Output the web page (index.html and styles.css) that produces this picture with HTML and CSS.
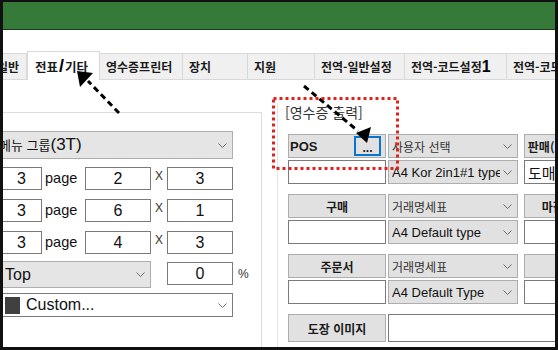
FILE: index.html
```html
<!DOCTYPE html>
<html lang="ko">
<head>
<meta charset="utf-8">
<title>설정</title>
<link rel="stylesheet" href="styles.css">
</head>
<body>
<div class="window">
  <div class="titlebar"></div>
  <div class="tabs">
    <div class="tab w-t1">일반</div>
    <div class="tab sel w-t2">전표<span class="slash">/</span>기타</div>
    <div class="tab w-t3">영수증프린터</div>
    <div class="tab w-t4">장치</div>
    <div class="tab w-t5">지원</div>
    <div class="tab w-t6">전역-일반설정</div>
    <div class="tab w-t7">전역-코드설정<span class="one">1</span></div>
    <div class="tab w-t8">전역-코드설정2</div>
  </div>
  <div class="content">
    <div class="left">
      <div class="lgroup">
        <div class="lin">
          <div class="combo gray big"><span class="txt"><span class="ko">메뉴 그룹</span>(3T)</span><svg class="chev" width="9" height="5" viewBox="0 0 9 5"><polyline points="0.5,0.5 4.5,4.5 8.5,0.5"/></svg></div>
          <div class="row">
            <div class="inp w41">3</div><div class="lbl-page">page</div><div class="inp w66">2</div><div class="lbl-x">X</div><div class="inp w66">3</div>
          </div>
          <div class="row">
            <div class="inp w41">3</div><div class="lbl-page">page</div><div class="inp w66">6</div><div class="lbl-x">X</div><div class="inp w66">1</div>
          </div>
          <div class="row row3">
            <div class="inp w41">3</div><div class="lbl-page">page</div><div class="inp w66">4</div><div class="lbl-x">X</div><div class="inp w66">3</div>
          </div>
          <div class="row row4">
            <div class="combo gray topsel"><span class="txt">Top</span><svg class="chev" width="9" height="5" viewBox="0 0 9 5"><polyline points="0.5,0.5 4.5,4.5 8.5,0.5"/></svg></div>
            <div class="inp w66 pct-in">0</div>
            <div class="lbl-pct">%</div>
          </div>
          <div class="combo white custom"><span class="swatch"></span><span class="txt">Custom...</span><svg class="chev" width="9" height="5" viewBox="0 0 9 5"><polyline points="0.5,0.5 4.5,4.5 8.5,0.5"/></svg></div>
        </div>
      </div>
    </div>
    <div class="right">
      <div class="rgroup">
        <div class="caption">[영수증 출력]</div>
        <div class="grp">
          <div class="btn pos"><span>POS</span><span class="more">...</span></div>
          <div class="cb"><span class="t ko">사용자 선택</span><svg class="chev" width="9" height="5" viewBox="0 0 9 5"><polyline points="0.5,0.5 4.5,4.5 8.5,0.5"/></svg></div>
          <div class="btn colc">판매(도매)명세서</div>
          <div class="rinp"></div>
          <div class="cb"><span class="t en">A4 Kor 2in1#1 type</span><svg class="chev" width="9" height="5" viewBox="0 0 9 5"><polyline points="0.5,0.5 4.5,4.5 8.5,0.5"/></svg></div>
          <div class="rinp colc"><span class="rtxt">도매거래처</span></div>
        </div>
        <div class="grp">
          <div class="btn">구매</div>
          <div class="cb"><span class="t ko">거래명세표</span><svg class="chev" width="9" height="5" viewBox="0 0 9 5"><polyline points="0.5,0.5 4.5,4.5 8.5,0.5"/></svg></div>
          <div class="btn colc">마감 정산서</div>
          <div class="rinp"></div>
          <div class="cb"><span class="t en">A4 Default type</span><svg class="chev" width="9" height="5" viewBox="0 0 9 5"><polyline points="0.5,0.5 4.5,4.5 8.5,0.5"/></svg></div>
          <div class="rinp colc"></div>
        </div>
        <div class="grp">
          <div class="btn">주문서</div>
          <div class="cb"><span class="t ko">거래명세표</span><svg class="chev" width="9" height="5" viewBox="0 0 9 5"><polyline points="0.5,0.5 4.5,4.5 8.5,0.5"/></svg></div>
          <div class="btn colc">발주</div>
          <div class="rinp"></div>
          <div class="cb"><span class="t en">A4 Default Type</span><svg class="chev" width="9" height="5" viewBox="0 0 9 5"><polyline points="0.5,0.5 4.5,4.5 8.5,0.5"/></svg></div>
          <div class="rinp colc"></div>
        </div>
        <div class="grp grp4">
          <div class="btn">도장 이미지</div>
          <div class="rinp wide"></div>
        </div>
      </div>
    </div>
  </div>
  <svg class="annot" width="558" height="350" viewBox="0 0 558 350">
    <rect x="273.5" y="98.5" width="124" height="70" fill="none" stroke="#e3201b" stroke-width="3" stroke-dasharray="3 3"/>
    <line x1="119" y1="113" x2="88" y2="81" stroke="#000" stroke-width="3" stroke-dasharray="6 4"/>
    <polygon points="77,71 93,73 80,87" fill="#000"/>
    <line x1="304" y1="86" x2="358" y2="131" stroke="#000" stroke-width="3" stroke-dasharray="6 4"/>
    <polygon points="356,133 371,127 367,143" fill="#000"/>
  </svg>
</div>
</body>
</html>
```

FILE: styles.css
```css
* { box-sizing: border-box; }
body { margin: 0; background: #fff; }

.window {
  position: relative;
  width: 558px;
  height: 350px;
  border: 3px solid #111;
  border-top-width: 2px;
  overflow: hidden;
  background: #fff;
  font-family: "Noto Sans CJK KR", sans-serif;
  color: #111;
}

.titlebar {
  height: 28px;
  background: #367a3a;
  border-bottom: 1px solid #1b3a1c;
}

.tabs {
  margin-top: 21px;
  height: 29px;
  display: flex;
  align-items: flex-end;
  border-bottom: 1px solid #d9d9d9;
}
.tab {
  flex: none;
  height: 26px;
  background: #f0f0f0;
  border-top: 1px solid #d9d9d9;
  border-right: 1px solid #d9d9d9;
  padding-left: 6px;
  font-size: 12px;
  font-weight: 700;
  color: #1a1a1a;
  display: flex;
  align-items: center;
  white-space: nowrap;
  overflow: hidden;
}
.tab.sel {
  height: 29px;
  margin-bottom: -1px;
  background: #fff;
  border-left: 1px solid #d9d9d9;
  padding-left: 7px;
  font-size: 12.5px;
  position: relative;
  z-index: 1;
}
.w-t1 { width: 36px; margin-left: -12px; }
.w-t2 { width: 73px; }
.w-t3 { width: 83px; }
.w-t4 { width: 65px; }
.w-t5 { width: 67px; }
.w-t6 { width: 90px; }
.w-t7 { width: 102px; }
.w-t8 { width: 100px; }
.slash {
  font-family: "Liberation Sans", sans-serif;
  font-size: 18px;
  font-weight: 900;
  margin: 0 1px;
  color: #000;
}
.one {
  font-family: "Liberation Sans", sans-serif;
  font-size: 16px;
  font-weight: 900;
  color: #000;
}

.content {
  display: flex;
  height: 267px;
  overflow: hidden;
}

/* left panel */
.left {
  flex: none;
  width: 259px;
  overflow: hidden;
}
.lgroup {
  margin-top: 32px;
  height: 300px;
  border-top: 1px solid #dcdcdc;
  border-right: 1px solid #dcdcdc;
  padding-top: 18px;
}
.lin {
  margin-left: -2px;
  display: flex;
  flex-direction: column;
}

.combo {
  display: flex;
  align-items: center;
  font-family: "Liberation Sans", "Noto Sans CJK KR", sans-serif;
  font-size: 16px;
  color: #111;
}
.combo .txt { flex: 1; white-space: nowrap; overflow: hidden; }
.combo.gray { background: #e5e5e5; border: 1px solid #adadad; }
.combo.white { background: #fff; border: 1px solid #7a7a7a; }
.chev { flex: none; fill: none; stroke: #6a6a6a; stroke-width: 1; }
.combo .chev { margin-right: 5px; }

.big { width: 232px; height: 28px; margin-bottom: 8px; font-size: 17px; }
.big .txt { margin-left: -3px; }
.ko { font-family: "Noto Sans CJK KR", sans-serif; font-size: 13px; }

.row {
  display: flex;
  align-items: flex-start;
  height: 23px;
  margin-bottom: 9px;
}
.row3 { margin-bottom: 7px; }
.row4 { height: 27px; margin-bottom: 5px; }

.inp {
  height: 23px;
  background: #fff;
  border: 1px solid #7a7a7a;
  font-family: "Liberation Sans", sans-serif;
  font-size: 16px;
  display: flex;
  align-items: center;
  justify-content: center;
}
.w41 { width: 41px; }
.w66 { width: 66px; }
.lbl-page {
  width: 43px;
  height: 23px;
  padding-left: 3px;
  font-family: "Liberation Sans", sans-serif;
  font-size: 14.5px;
  line-height: 23px;
}
.lbl-x {
  width: 16px;
  margin-top: 2px;
  text-align: center;
  font-family: "Liberation Sans", sans-serif;
  font-size: 12px;
  line-height: 14px;
  color: #333;
}
.topsel { width: 150px; height: 27px; }
.topsel .txt { padding-left: 3px; }
.pct-in { margin-left: 16px; margin-top: 1px; }
.lbl-pct {
  margin-left: 5px;
  margin-top: 6px;
  font-family: "Liberation Sans", sans-serif;
  font-size: 12px;
  line-height: 14px;
  color: #333;
}
.custom { width: 232px; height: 24px; }
.swatch {
  flex: none;
  width: 15px;
  height: 17px;
  margin-left: 3px;
  margin-right: 6px;
  background: #404040;
}

/* right panel */
.right { flex: 1; min-width: 0; }
.rgroup {
  margin-left: 15px;
  height: 100%;
  border-left: 1px solid #e6e6e6;
  padding-left: 10px;
}
.caption {
  margin-top: 23px;
  margin-left: -3px;
  height: 18px;
  font-size: 14px;
  line-height: 18px;
  color: #333;
  margin-bottom: 13px;
}
.grp {
  display: grid;
  grid-template-columns: 98px 130px 98px;
  grid-template-rows: 24px 24px;
  column-gap: 2px;
  row-gap: 2px;
  margin-bottom: 10px;
}
.grp4 {
  grid-template-columns: 98px 240px;
  grid-template-rows: 28px;
  margin-top: 3px;
}
.colc { margin-left: 4px; }

.btn {
  border: 1px solid #adadad;
  background: #e1e1e1;
  font-size: 12px;
  font-weight: 700;
  color: #1a1a1a;
  display: flex;
  align-items: center;
  justify-content: center;
  white-space: nowrap;
  overflow: hidden;
}
.btn.pos {
  justify-content: space-between;
  padding-left: 1px;
  font-family: "Liberation Sans", sans-serif;
  font-size: 13px;
}
.more {
  width: 27px;
  height: 20px;
  margin-right: 4px;
  border: 2px solid #0a74cc;
  background: #e1e1e1;
  font-size: 12px;
  line-height: 20px;
  text-align: center;
  letter-spacing: 0;
}
.cb {
  border: 1px solid #adadad;
  background: #e1e1e1;
  padding-left: 3px;
  padding-right: 5px;
  display: flex;
  align-items: center;
}
.cb .t { flex: 1; white-space: nowrap; overflow: hidden; }
.cb .t.ko { font-size: 12px; color: #333; }
.cb .t.en {
  font-family: "Liberation Sans", sans-serif;
  font-size: 13px;
  color: #111;
  margin-right: 3px;
}
.rinp {
  border: 1px solid #7a7a7a;
  background: #fff;
  display: flex;
  align-items: center;
  overflow: hidden;
}
.rtxt {
  padding-left: 3px;
  font-size: 15px;
  white-space: nowrap;
}

.annot {
  position: absolute;
  left: -3px;
  top: -2px;
  z-index: 5;
  pointer-events: none;
}
```
